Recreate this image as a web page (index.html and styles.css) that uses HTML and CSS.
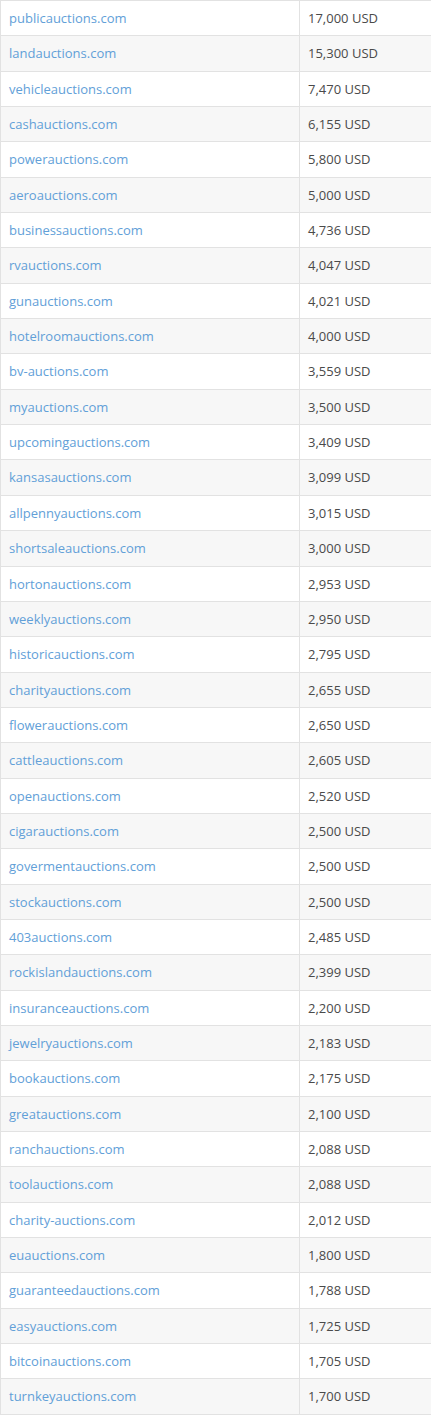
FILE: index.html
```html
<!DOCTYPE html>
<html lang="en">
<head>
<meta charset="utf-8">
<title>Auction domains</title>
<link rel="stylesheet" href="styles.css">
</head>
<body>
<table class="domains">
<colgroup><col class="col-name"><col class="col-price"></colgroup>
<tbody>
<tr><td><a href="#">publicauctions.com</a></td><td>17,000 USD</td></tr>
<tr><td><a href="#">landauctions.com</a></td><td>15,300 USD</td></tr>
<tr><td><a href="#">vehicleauctions.com</a></td><td>7,470 USD</td></tr>
<tr><td><a href="#">cashauctions.com</a></td><td>6,155 USD</td></tr>
<tr><td><a href="#">powerauctions.com</a></td><td>5,800 USD</td></tr>
<tr><td><a href="#">aeroauctions.com</a></td><td>5,000 USD</td></tr>
<tr><td><a href="#">businessauctions.com</a></td><td>4,736 USD</td></tr>
<tr><td><a href="#">rvauctions.com</a></td><td>4,047 USD</td></tr>
<tr><td><a href="#">gunauctions.com</a></td><td>4,021 USD</td></tr>
<tr><td><a href="#">hotelroomauctions.com</a></td><td>4,000 USD</td></tr>
<tr><td><a href="#">bv-auctions.com</a></td><td>3,559 USD</td></tr>
<tr><td><a href="#">myauctions.com</a></td><td>3,500 USD</td></tr>
<tr><td><a href="#">upcomingauctions.com</a></td><td>3,409 USD</td></tr>
<tr><td><a href="#">kansasauctions.com</a></td><td>3,099 USD</td></tr>
<tr><td><a href="#">allpennyauctions.com</a></td><td>3,015 USD</td></tr>
<tr><td><a href="#">shortsaleauctions.com</a></td><td>3,000 USD</td></tr>
<tr><td><a href="#">hortonauctions.com</a></td><td>2,953 USD</td></tr>
<tr><td><a href="#">weeklyauctions.com</a></td><td>2,950 USD</td></tr>
<tr><td><a href="#">historicauctions.com</a></td><td>2,795 USD</td></tr>
<tr><td><a href="#">charityauctions.com</a></td><td>2,655 USD</td></tr>
<tr><td><a href="#">flowerauctions.com</a></td><td>2,650 USD</td></tr>
<tr><td><a href="#">cattleauctions.com</a></td><td>2,605 USD</td></tr>
<tr><td><a href="#">openauctions.com</a></td><td>2,520 USD</td></tr>
<tr><td><a href="#">cigarauctions.com</a></td><td>2,500 USD</td></tr>
<tr><td><a href="#">govermentauctions.com</a></td><td>2,500 USD</td></tr>
<tr><td><a href="#">stockauctions.com</a></td><td>2,500 USD</td></tr>
<tr><td><a href="#">403auctions.com</a></td><td>2,485 USD</td></tr>
<tr><td><a href="#">rockislandauctions.com</a></td><td>2,399 USD</td></tr>
<tr><td><a href="#">insuranceauctions.com</a></td><td>2,200 USD</td></tr>
<tr><td><a href="#">jewelryauctions.com</a></td><td>2,183 USD</td></tr>
<tr><td><a href="#">bookauctions.com</a></td><td>2,175 USD</td></tr>
<tr><td><a href="#">greatauctions.com</a></td><td>2,100 USD</td></tr>
<tr><td><a href="#">ranchauctions.com</a></td><td>2,088 USD</td></tr>
<tr><td><a href="#">toolauctions.com</a></td><td>2,088 USD</td></tr>
<tr><td><a href="#">charity-auctions.com</a></td><td>2,012 USD</td></tr>
<tr><td><a href="#">euauctions.com</a></td><td>1,800 USD</td></tr>
<tr><td><a href="#">guaranteedauctions.com</a></td><td>1,788 USD</td></tr>
<tr><td><a href="#">easyauctions.com</a></td><td>1,725 USD</td></tr>
<tr><td><a href="#">bitcoinauctions.com</a></td><td>1,705 USD</td></tr>
<tr><td><a href="#">turnkeyauctions.com</a></td><td>1,700 USD</td></tr>
</tbody>
</table>
</body>
</html>
```
FILE: styles.css
```css
html, body {
  margin: 0;
  padding: 0;
  background: #ffffff;
}
body {
  font-family: "Open Sans", "Liberation Sans", sans-serif;
  font-size: 13px;
  color: #4a4a4a;
}
.domains {
  width: 431px;
  border-collapse: collapse;
  table-layout: fixed;
}
.col-name { width: 299px; }
.col-price { width: 132px; }
.domains td {
  border: 1px solid #e2e2e2;
  padding: 8px 8px;
  line-height: 18.35px;
  vertical-align: top;
  white-space: nowrap;
}
.domains tr:nth-child(even) td {
  background: #f7f7f7;
}
.domains a {
  color: #62a0d8;
  text-decoration: none;
}
```
